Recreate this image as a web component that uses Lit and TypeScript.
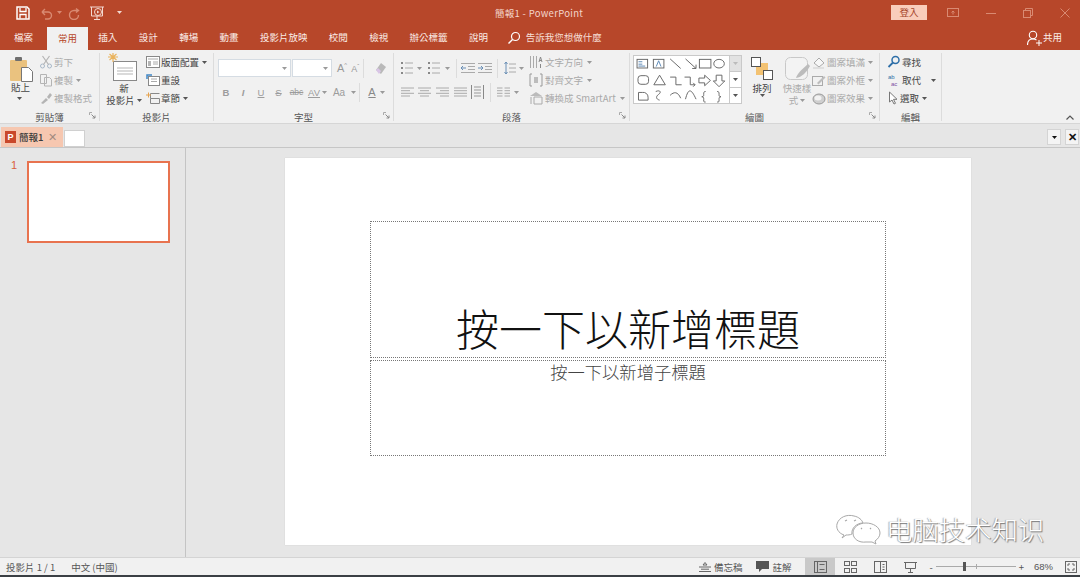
import { LitElement, html, css, svg } from 'lit';
import { customElement } from 'lit/decorators.js';

const GREY = '#9a9a9a';
const DARK = '#555';

// small helper so every icon shares the same svg setup
const ico = (w: number, h: number, body: unknown) => html`<svg class="ico" width=${w} height=${h} viewBox="0 0 ${w} ${h}" fill="none">${body}</svg>`;

const icons = {
  save: ico(14, 14, svg`<path d="M1 1h10l2 2v10H1z" stroke="#fff" stroke-width="1.500"/><path d="M4 2v3.500h6V2M4 12.500V8.500h6v4" stroke="#fff" stroke-width="1.300"/>`),
  undo: ico(14, 14, svg`<path d="M3 6h6a3.500 3.500 0 0 1 0 7H6M3 6l3-3M3 6l3 3" stroke="#d98a72" stroke-width="1.400"/>`),
  redo: ico(14, 14, svg`<path d="M9 2.500l2.500 2-2.500 2M11 4.500H7a4.500 4.500 0 1 0 4.500 4.500" stroke="#d98a72" stroke-width="1.400"/>`),
  present: ico(16, 16, svg`<path d="M1 2h14M2.500 2v9h11V2M8 11v3M5 14.500h6" stroke="#f3d9d0"/><circle cx="9" cy="7" r="3.500" stroke="#f3d9d0"/><path d="M8 5.500l2.500 1.500L8 8.500z" fill="#f3d9d0"/>`),
  search: ico(14, 14, svg`<circle cx="8.500" cy="5.500" r="4" stroke="#fff" stroke-width="1.200"/><path d="M5.500 8.500L1.500 12.500" stroke="#fff" stroke-width="1.400"/>`),
  share: ico(15, 16, svg`<circle cx="6" cy="5" r="3.700" stroke="#fff" stroke-width="1.100"/><path d="M.5 15c0-4 2-6 5.500-6 1.500 0 2.500.3 3.500 1" stroke="#fff" stroke-width="1.100"/><path d="M9 13h6M12 10v6" stroke="#fff"/>`),
  ribbonOpt: ico(12, 10, svg`<rect x=".5" y=".5" width="11" height="8" stroke="#d98a72"/><path d="M6 6.500V3M4.500 4.500L6 3l1.500 1.500" stroke="#d98a72"/>`),
  min: ico(10, 10, svg`<path d="M0 5.500h10" stroke="#d98a72"/>`),
  restore: ico(10, 10, svg`<rect x=".5" y="2.500" width="7" height="7" stroke="#d98a72"/><path d="M2.500 2.500v-2h7v7h-2" stroke="#d98a72"/>`),
  close: ico(10, 10, svg`<path d="M.5.500l9 9M9.500.500l-9 9" stroke="#d98a72"/>`),
  paste: ico(24, 25, svg`<rect x="0" y="3" width="17" height="21" rx="1" fill="#eac27f"/><rect x="5" y="0" width="7" height="4" rx="1" fill="#6f6f6f"/><path d="M11.500 10.500h7l4 4v10h-11z" fill="#fff" stroke="#777"/>`),
  cut: ico(14, 14, svg`<circle cx="3.500" cy="11" r="2" stroke="#a8b8c8"/><circle cx="10.500" cy="11" r="2" stroke="#a8b8c8"/><path d="M4.500 9.500L10.500 1M9.500 9.500L3.500 1" stroke="#b4b4b4" stroke-width="1.200"/>`),
  copy: ico(14, 14, svg`<path d="M1.500 1.500h6v9h-6zM5.500 4.500h5l2 2v6.500h-7z" stroke="#b4b4b4" fill="#f1f1f1"/>`),
  brush: ico(14, 14, svg`<path d="M2 12l5-5 2 2-5 4zM8 6l3-4 2 2-3 4z" fill="#b4b4b4"/>`),
  newSlide: ico(34, 32, svg`<rect x="6.500" y="8.500" width="23" height="19" fill="#fff" stroke="#888"/><path d="M10 15h16M10 18h16M10 21h16" stroke="#b5b5b5"/><path d="M1 4h10M6 0v9M2.500 1l7 6M9.500 1l-7 6" stroke="#eab35c" stroke-width="1.200"/>`),
  layout: ico(14, 12, svg`<rect x=".5" y=".5" width="13" height="11" fill="#fff" stroke="#888"/><path d="M2 3h10" stroke="#aaa"/><rect x="2" y="5" width="3" height="5" fill="#b5b5b5"/><path d="M7 6h5M7 8h5" stroke="#aaa"/>`),
  reset: ico(14, 12, svg`<rect x="2.500" y="2.500" width="11" height="9" fill="#fff" stroke="#888"/><path d="M5 5h6M5 7.500h6" stroke="#aaa"/><path d="M1 5V1h5" stroke="#3f86c6" stroke-width="1.500"/>`),
  section: ico(14, 12, svg`<path d="M4.500 1.500h9M4.500 6.500h9v5h-9zM4.500 1.500v5" stroke="#888"/><path d="M0 3h5M2.500.500v5" stroke="#e6a24d"/>`),
  eraser: ico(14, 14, svg`<path d="M2 9l5-7 5 4-5 7z" fill="#b9b9b9"/><path d="M2 9l3 4 2-3-3-3z" fill="#d9c5e6"/>`),
  list: ico(12, 14, svg`<path d="M0 2h2M0 7h2M0 12h2" stroke="#666" stroke-width="1.500"/><path d="M4 2h8M4 7h8M4 12h8" stroke="#aaa"/>`),
  indentL: ico(14, 12, svg`<path d="M0 1.500h14M7 4.500h7M7 7.500h7M0 10.500h14" stroke="#aaa"/><path d="M0 6h5M0 6l2-2M0 6l2 2" stroke="#6a8fb5"/>`),
  indentR: ico(14, 12, svg`<path d="M0 1.500h14M7 4.500h7M7 7.500h7M0 10.500h14" stroke="#aaa"/><path d="M0 6h5M5 6L3 4M5 6L3 8" stroke="#6a8fb5"/>`),
  lineH: ico(12, 14, svg`<path d="M5 3h7M5 7h7M5 11h7" stroke="#aaa"/><path d="M2 1v12M.5 3L2 1l1.500 2M.5 11L2 13l1.500-2" stroke="#6a8fb5"/>`),
  alignL: ico(13, 10, svg`<path d="M0 1h13M0 3.700h9M0 6.300h13M0 9h9" stroke="#aaa"/>`),
  alignC: ico(13, 10, svg`<path d="M0 1h13M2 3.700h9M0 6.300h13M2 9h9" stroke="#aaa"/>`),
  alignR: ico(13, 10, svg`<path d="M0 1h13M4 3.700h9M0 6.300h13M4 9h9" stroke="#aaa"/>`),
  alignJ: ico(13, 10, svg`<path d="M0 1h13M0 3.700h13M0 6.300h13M0 9h13" stroke="#aaa"/>`),
  alignD: ico(13, 14, svg`<path d="M.5 0v14M12.500 0v14" stroke="#888"/><path d="M3 2h7M3 5h7M3 8h7M3 11h7" stroke="#999"/>`),
  cols: ico(13, 10, svg`<path d="M0 1h5.500M0 3.700h5.500M0 6.300h5.500M0 9h5.500M7.500 1h5.500M7.500 3.700h5.500M7.500 6.300h5.500M7.500 9h5.500" stroke="#aaa"/>`),
  textDir: ico(14, 14, svg`<path d="M1.500 1v12M4.500 1v12M7.500 1v12" stroke="#aaa"/><path d="M10 7l1.500-5L13 7M10.500 5.500h2M11.500 9v4" stroke="#888"/>`),
  alignText: ico(14, 14, svg`<path d="M3 1H1v12h2M11 1h2v12h-2" stroke="#999"/><path d="M5 5h4M5 7h4M5 9h4" stroke="#888"/>`),
  smartArt: ico(14, 14, svg`<path d="M1 5l6-4 6 4z" fill="#bbb"/><path d="M5 6h8v7H5z" stroke="#aaa"/><path d="M2 6v7" stroke="#aaa"/>`),
  arrange: ico(22, 23, svg`<rect x="5" y="6" width="12" height="12" fill="#f3c272"/><rect x=".5" y=".5" width="9" height="9" fill="#fff" stroke="#555"/><rect x="12.500" y="13.500" width="9" height="9" fill="#fff" stroke="#555"/>`),
  quick: ico(25, 23, svg`<rect x=".5" y=".5" width="22" height="22" rx="5" fill="#f3f3f3" stroke="#c8c8c8"/><path d="M11 21c1-4 5-8 12-14l2 2c-4 7-8 11-14 12z" fill="#bcbcbc"/>`),
  fill: ico(14, 13, svg`<path d="M2 7l5-5 5 5-5 4z" stroke="#aaa" fill="#f7f7f7"/><path d="M1 12h11" stroke="#d8d8d8" stroke-width="1.500"/>`),
  outline: ico(14, 13, svg`<rect x=".5" y="2.500" width="10" height="9" stroke="#aaa"/><path d="M5 9l7-7 1.500 1.500-7 7z" fill="#bdbdbd"/>`),
  effect: ico(14, 13, svg`<ellipse cx="7" cy="7" rx="6" ry="5" fill="#cfcfcf" stroke="#999"/><ellipse cx="6" cy="6" rx="3.500" ry="2.500" fill="#f2f2f2"/>`),
  find: ico(14, 14, svg`<circle cx="8.500" cy="5" r="3.500" stroke="#2e6fa8" stroke-width="1.500"/><path d="M6 7.500L1.500 12" stroke="#2e6fa8" stroke-width="1.800"/>`),
  pointer: ico(12, 14, svg`<path d="M2.500 1v10l2.500-2 2 4 1.500-.7-2-4h3.500z" stroke="#777" fill="#fff"/>`),
  notes: ico(12, 10, svg`<path d="M6 .5l2 2.500H4zM0 5h12M2 7.200h8M0 9.500h12" stroke="#666"/>`),
  comment: ico(13, 11, svg`<path d="M0 0h13v8H6l-3 3V8H0z" fill="#555"/>`),
  normal: ico(13, 12, svg`<rect x=".5" y=".5" width="12" height="11" stroke="#666"/><path d="M3.500.5v11M5.500 3.500h5M5.500 8.500h5" stroke="#666"/>`),
  sorter: ico(13, 12, svg`<rect x=".5" y=".5" width="5" height="4" stroke="#666"/><rect x="7.500" y=".5" width="5" height="4" stroke="#666"/><rect x=".5" y="7.500" width="5" height="4" stroke="#666"/><rect x="7.500" y="7.500" width="5" height="4" stroke="#666"/>`),
  reading: ico(13, 12, svg`<rect x=".5" y=".5" width="12" height="11" stroke="#666"/><path d="M6.500.5v11M8.500 3.500h2M8.500 6h2M8.500 8.500h2" stroke="#666"/>`),
  show: ico(13, 12, svg`<path d="M0 1.500h13M1.500 1.500v6h10v-6M6.500 7.500v4M4 11.500h5" stroke="#666"/>`),
  fit: ico(12, 12, svg`<rect x=".5" y=".5" width="11" height="11" stroke="#666"/><path d="M3 5V3h2M7 3h2v2M9 7v2H7M5 9H3V7" stroke="#666"/>`),
};

const caret = (c = GREY) => html`<svg class="caret" width="5" height="3" viewBox="0 0 5 3"><path d="M0 0h5L2.500 3z" fill=${c}/></svg>`;

const launcher = html`<svg class="launcher" width="7" height="7" viewBox="0 0 7 7" fill="none"><path d="M.5 3V.5H3" stroke="#aaa"/><path d="M2.500 2.500L6 6M6 3.500V6H3.500" stroke="#8a8a8a"/></svg>`;

const gallery = svg`<svg class="shapes" width="98" height="47" viewBox="0 0 98 49" fill="none" stroke="#666">
  <rect x="2.500" y="3.500" width="11" height="9" fill="#fff"/><path d="M4 6h4M4 8.500h4M4 10.500h7" stroke="#5b88b5"/>
  <rect x="19.500" y="3.500" width="11" height="9" fill="#fff"/><path d="M25 5l-2.500 6M25 5l2.500 6" stroke="#5b88b5"/>
  <path d="M37 3l11 10M53 3l11 10M60 13h4v-4"/>
  <rect x="67.500" y="3.500" width="12" height="9"/><ellipse cx="88" cy="8" rx="5.500" ry="4.500"/>
  <rect x="3.500" y="20.500" width="11" height="9" rx="3"/><path d="M26 20l6 10H20zM37 22h6v8h6M52 22h6v8h5M61 28l2 2-2 2"/>
  <path d="M67 23h6v-3l6 5.500-6 5.500v-3h-6zM85 20h6v6h3l-6 6-6-6h3z"/>
  <path d="M4 38h4a5 5 0 0 1 6 5v3H4zM22 37c5-2 6 1 3 3s-3 5 1 6M37 41c4-4 8-4 11 3M53 45c3-12 6-11 11 0M74 37c-2 0-2 1-2 3s0 2-2 2.500c2 .5 2 .5 2 3s0 2.500 2 2.500M86 37c2 0 2 1 2 3s0 2 2 2.500c-2 .5-2 .5-2 3s0 2.500-2 2.500"/>
</svg>`;

@customElement('app-root')
export class AppRoot extends LitElement {
  static styles = css`
    :host {
      display: block;
      width: 1080px;
      height: 577px;
      overflow: hidden;
      font-family: "Noto Sans CJK TC", "Liberation Sans", sans-serif;
      font-size: 9.5px;
      color: #444;
      background: #e6e6e6;
    }
    .ico, .caret, .launcher { display: block; flex: none; }

    .titlebar {
      height: 25px;
      background: #b7472a;
      display: flex;
      align-items: center;
      color: #f3d5ca;
    }
    .qat {
      width: 495px;
      display: flex;
      align-items: center;
      padding-left: 16px;
      box-sizing: border-box;
    }
    .qat .undo { margin: 0 4px 0 9px; }
    .qat .redo { margin: 0 8px 0 5px; }
    .qat .more { margin-left: 12px; }
    .title { width: 396px; letter-spacing: .3px; white-space: nowrap; }
    .signin {
      width: 36px;
      height: 15px;
      line-height: 15px;
      text-align: center;
      background: #f9cdbb;
      color: #a5442a;
    }
    .winbtns { display: flex; align-items: center; gap: 27px; margin-left: 20px; }

    .tabs {
      height: 25px;
      background: #b7472a;
      display: flex;
      padding-left: 3.3px;
      color: #fbeee9;
      line-height: 25px;
    }
    .tab { padding: 0 10.7px; white-space: nowrap; }
    .tab.active {
      background: #f1f1f1;
      color: #b7472a;
      height: 23px;
      margin: 2px 0 0 3.6px;
      line-height: 23px;
    }
    .tell { display: flex; align-items: center; gap: 5px; margin-left: 8px; color: #f6dfd7; }
    .shareBtn { display: flex; align-items: center; gap: 1px; margin-left: auto; padding-right: 18px; }

    .ribbon {
      height: 74px;
      background: #f1f1f1;
      display: flex;
      border-bottom: 1px solid #d6d6d6;
      box-sizing: border-box;
      position: relative;
    }
    .group {
      position: relative;
      flex: none;
      display: flex;
      flex-direction: column;
      border-right: 1px solid #dcdcdc;
      margin: 3px 0 2px;
      box-sizing: border-box;
    }
    .g-clip { width: 100px; }
    .g-slides { width: 114px; }
    .g-font { width: 180px; }
    .g-para { width: 236px; }
    .g-draw { width: 250px; }
    .g-edit { width: 62px; }
    .gbody { height: 56px; display: flex; flex: none; }
    .glabel { text-align: center; line-height: 16px; height: 12px; color: #555; }
    .launcher { position: absolute; right: 3px; bottom: 2px; }

    .col { display: flex; flex-direction: column; }
    .row { height: 18px; display: flex; align-items: center; gap: 1px; white-space: nowrap; }
    .row.off { color: #a9a9a9; }
    .row .caret { margin-left: 2px; }
    .big { display: flex; flex-direction: column; align-items: center; line-height: 12px; padding-top: 4px; box-sizing: border-box; }
    .big > .lbl { margin-top: 2px; }
    .inline { display: flex; align-items: center; gap: 2px; }
    .big.off { color: #aaa; }
    .sep { width: 1px; height: 19px; background: #dcdcdc; flex: none; }

    .paste { width: 39px; padding-left: 10px; align-items: flex-start; }
    .paste > .lbl { margin: -1px 0 0 1px; }
    .paste .caret { margin: 4px 0 0 7px; }
    .newslide { width: 46px; padding: 0 0 0 2px; }
    .newslide > .lbl { margin-top: -3px; }
    .f-col { padding-left: 4px; }
    .f-top { display: flex; align-items: center; height: 24px; margin-top: 3px; }
    .f-a1 { margin-left: 5px; font: 11px "Liberation Sans", sans-serif; color: #999; }
    .f-a2 { margin-left: 4px; font: 9px "Liberation Sans", sans-serif; color: #999; }
    .f-a1 sup, .f-a2 sup { font-size: 6px; }
    .f-top .sep { margin: 0 10px 0 4px; }

    .combo {
      height: 18px;
      background: #fff;
      border: 1px solid #d5dce3;
      box-sizing: border-box;
      display: flex;
      align-items: center;
      justify-content: flex-end;
      padding-right: 3px;
    }
    .combo.name { width: 73px; }
    .combo.size { width: 40px; margin-left: 1px; }

    .fontRow { height: 24px; display: flex; align-items: center; color: #9c9c9c; }
    .fontRow span { flex: none; text-align: center; font-family: "Liberation Sans", sans-serif; }
    .fontRow .sep { margin: 0 4px 0 3px; }
    .fb { width: 16px; font-weight: bold; }
    .fi { width: 18px; font-style: italic; font-weight: bold; }
    .fu { width: 18px; text-decoration: underline; }
    .fs { width: 17px; text-decoration: line-through; }
    .fabc { width: 19px; text-decoration: line-through; font-size: 8.5px; }
    .fav { width: 16px; text-decoration: underline; }
    .faa { width: 24px; font-size: 10px; }
    .fcolor { width: 16px; font-size: 11px; text-decoration: underline; color: #888; }

    .p-left { width: 135px; padding-left: 7px; box-sizing: border-box; }
    .p-top { display: flex; align-items: center; height: 24px; margin-top: 3px; }
    .p-bot { display: flex; align-items: center; gap: 4px; height: 24px; }
    .p-bot .sep { margin: 0 2px; }
    .a13 { width: 13px; }
    .a14 { width: 14px; }
    .p-top > .m3 { margin-left: 3px; }
    .p-top > .m4 { margin-left: 4px; }
    .p-top > .m5 { margin-left: 5px; }
    .p-top > .m6 { margin-left: 6px; }
    .p-right .row { gap: 2px; }

    .gallery {
      width: 109px;
      height: 49px;
      margin: 2px 0 0 3px;
      background: #fff;
      border: 1px solid #c9c9c9;
      box-sizing: border-box;
      display: flex;
      justify-content: space-between;
    }
    .shapes { display: block; }
    .scroll { width: 11px; display: flex; flex-direction: column; border-left: 1px solid #c9c9c9; }
    .scroll div { flex: 1; display: flex; align-items: center; justify-content: center; border-bottom: 1px solid #c9c9c9; }
    .scroll div:first-child { background: #e2e2e2; }
    .scroll div:last-child { border-bottom: 0; }
    .arrange { width: 26px; margin-left: 7px; }
    .quick { width: 30px; margin-left: 7px; }
    .e-col { padding-left: 7px; }
    .e-gap { width: 6px; }
    .collapse { position: absolute; right: 6px; bottom: 3px; }
    .abac { display: block; flex: none; }

    .docbar {
      height: 24px;
      background: #e6e6e6;
      border-bottom: 1px solid #c6c6c6;
      box-sizing: border-box;
      display: flex;
      align-items: flex-end;
      padding-left: 1px;
      gap: 1px;
    }
    .doctab {
      width: 62px;
      height: 20px;
      background: #f6c7b0;
      display: flex;
      align-items: center;
      gap: 3px;
      padding-left: 4px;
      box-sizing: border-box;
      color: #3a3a3a;
      font-weight: 500;
    }
    .doctab .x { margin-left: 2px; color: #a08a80; font-family: "Liberation Sans", sans-serif; font-size: 11px; }
    .docnew { width: 21px; height: 17px; background: #fff; border: 1px solid #d0d0d0; box-sizing: border-box; }
    .ppt {
      width: 11px;
      height: 12px;
      background: #c9482b;
      color: #fff;
      font: bold 9px/12px "Liberation Sans", sans-serif;
      text-align: center;
    }
    .docbtns { margin-left: auto; display: flex; gap: 4px; padding: 0 1px 2px 0; }
    .docbtn {
      width: 14px;
      height: 16px;
      background: #f4f4f4;
      border: 1px solid #d4d4d4;
      box-sizing: border-box;
      display: flex;
      align-items: center;
      justify-content: center;
      color: #111;
      font: bold 11px/1 "Liberation Sans", sans-serif;
    }

    .main { height: 410px; display: flex; position: relative; background: #e6e6e6; border-bottom: 1px solid #d4d4d4; box-sizing: border-box; }
    .thumbs {
      width: 186px;
      border-right: 1px solid #c4c4c4;
      box-sizing: border-box;
      display: flex;
      padding: 12px 0 0 11px;
      gap: 10px;
    }
    .thumbNum { color: #d9603b; font: 11px/11px "Liberation Sans", sans-serif; }
    .thumb { width: 143px; height: 82px; background: #fff; border: 2px solid #e8734f; box-sizing: border-box; margin-top: 1px; }
    .stage { flex: 1; padding: 10px 0 0 99px; }
    .slide {
      width: 686px;
      height: 387px;
      background: #fff;
      box-shadow: 0 0 1px #c4c4c4;
      padding: 63px 0 0 85px;
      box-sizing: border-box;
    }
    .ph {
      width: 516px;
      box-sizing: border-box;
      border: 1px dotted #777;
      display: flex;
      justify-content: center;
      color: #222;
      font-weight: 300;
      white-space: nowrap;
    }
    .ph.t { height: 137px; align-items: flex-end; font-size: 43px; line-height: 54px; padding-bottom: 3px; margin-bottom: 2px; color: #111; }
    .ph.s { height: 96px; font-size: 17.3px; line-height: 22px; color: #444; }

    .wm {
      position: absolute;
      left: 835px;
      top: 365px;
      display: flex;
      align-items: center;
      font-family: "Noto Sans CJK SC", sans-serif;
      font-size: 26.4px;
      line-height: 32px;
      color: #fff;
      white-space: nowrap;
      text-shadow: 1px 1px 1px #777, -1px 0 1px #aaa;
      font-weight: 300;
    }
    .wm svg { margin-right: 3px; }

    .status {
      height: 17px;
      background: #f1f1f1;
      display: flex;
      align-items: center;
      padding-left: 6px;
      color: #555;
      white-space: nowrap;
    }
    .status .lang { margin-left: 16px; }
    .status .right { margin-left: auto; display: flex; align-items: center; height: 17px; }
    .sitem { display: flex; align-items: center; gap: 3px; }
    .sitem.mr { margin-right: 14px; }
    .view { width: 30px; height: 17px; display: flex; align-items: center; justify-content: center; }
    .view.on { background: #c9c9c9; }
    .zoombar { margin-left: 4px; }
    .slider { position: relative; width: 80px; height: 1px; background: #aaa; }
    .knob { position: absolute; left: 27px; top: -4px; width: 3px; height: 9px; background: #555; }
    .tick { position: absolute; left: 40px; top: -2px; width: 1px; height: 5px; background: #aaa; }
    .pct { margin-left: 10px; width: 31px; font-family: "Liberation Sans", sans-serif; }
    .endpad { width: 3px; }
    .foot { height: 2px; background: #3a3f44; }
  `;

  render() {
    return html`
      <div class="titlebar">
        <div class="qat">
          ${icons.save}
          <span class="undo">${icons.undo}</span>
          ${caret('#d98a72')}
          <span class="redo">${icons.redo}</span>
          ${icons.present}
          <span class="more">${caret('#f3d9d0')}</span>
        </div>
        <div class="title">簡報1 - PowerPoint</div>
        <div class="signin">登入</div>
        <div class="winbtns">
          ${icons.ribbonOpt}${icons.min}${icons.restore}${icons.close}
        </div>
      </div>

      <div class="tabs">
        ${['檔案', '常用', '插入', '設計', '轉場', '動畫', '投影片放映', '校閱', '檢視', '辦公標籤', '說明'].map(
          (t, i) => html`<div class="tab ${i === 1 ? 'active' : ''}">${t}</div>`
        )}
        <div class="tell">${icons.search}<span>告訴我您想做什麼</span></div>
        <div class="shareBtn">${icons.share}<span>共用</span></div>
      </div>

      <div class="ribbon">
        ${this.clipboard()}
        ${this.slides()}
        ${this.font()}
        ${this.paragraph()}
        ${this.drawing()}
        ${this.editing()}
        <svg class="collapse" width="8" height="5" viewBox="0 0 8 5" fill="none"><path d="M.5 4.500L4 1l3.500 3.500" stroke="#555" stroke-width="1.200"/></svg>
      </div>

      <div class="docbar">
        <div class="doctab"><div class="ppt">P</div><span>簡報1</span><span class="x">✕</span></div>
        <div class="docnew"></div>
        <div class="docbtns">
          <div class="docbtn">${caret('#111')}</div>
          <div class="docbtn">✕</div>
        </div>
      </div>

      <div class="main">
        <div class="thumbs">
          <div class="thumbNum">1</div>
          <div class="thumb"></div>
        </div>
        <div class="stage">
          <div class="slide">
            <div class="ph t">按一下以新增標題</div>
            <div class="ph s">按一下以新增子標題</div>
          </div>
        </div>
        <div class="wm">
          <svg width="48" height="32" viewBox="0 0 48 32" fill="none" stroke="#a8a8a8">
            <path d="M9 22C3 20 1 15 2 11 4 4 12 1 19 3c5 1 8 4 9 7-6 0-12 5-11 11-2 1-4 1-6 1l-4 3z" fill="#fff"/>
            <path d="M31 29c-7 1-13-3-13-9s6-10 13-10 14 4 14 10c0 3-2 6-5 8l1 3-4-2z" fill="#fff"/>
            <path d="M10 8l2-1M19 8l2-1M26 16l1-1M35 16l1-1" stroke-width="1.200"/>
          </svg>
          <span>电脑技术知识</span>
        </div>
      </div>

      <div class="status">
        <span>投影片 1 / 1</span>
        <span class="lang">中文 (中國)</span>
        <div class="right">
          <div class="sitem mr">${icons.notes}<span>備忘稿</span></div>
          <div class="sitem mr">${icons.comment}<span>註解</span></div>
          <div class="view on">${icons.normal}</div>
          <div class="view">${icons.sorter}</div>
          <div class="view">${icons.reading}</div>
          <div class="view">${icons.show}</div>
          <div class="sitem zoombar">
            <span>-</span>
            <div class="slider"><div class="tick"></div><div class="knob"></div></div>
            <span>+</span>
          </div>
          <span class="pct">68%</span>
          ${icons.fit}
          <span class="endpad"></span>
        </div>
      </div>
      <div class="foot"></div>
    `;
  }

  clipboard() {
    return html`
      <div class="group g-clip">
        <div class="gbody">
          <div class="big paste">
            ${icons.paste}
            <span class="lbl">貼上</span>
            ${caret(DARK)}
          </div>
          <div class="col">
            <div class="row off">${icons.cut}<span>剪下</span></div>
            <div class="row off">${icons.copy}<span>複製</span>${caret()}</div>
            <div class="row off">${icons.brush}<span>複製格式</span></div>
          </div>
        </div>
        <div class="glabel">剪貼簿</div>
        ${launcher}
      </div>`;
  }

  slides() {
    return html`
      <div class="group g-slides">
        <div class="gbody">
          <div class="big newslide">
            ${icons.newSlide}
            <span class="lbl">新</span>
            <span class="inline">投影片${caret(DARK)}</span>
          </div>
          <div class="col">
            <div class="row">${icons.layout}<span>版面配置</span>${caret(DARK)}</div>
            <div class="row">${icons.reset}<span>重設</span></div>
            <div class="row">${icons.section}<span>章節</span>${caret(DARK)}</div>
          </div>
        </div>
        <div class="glabel">投影片</div>
      </div>`;
  }

  font() {
    return html`
      <div class="group g-font">
        <div class="gbody">
          <div class="col f-col">
            <div class="f-top">
              <div class="combo name">${caret()}</div>
              <div class="combo size">${caret()}</div>
              <span class="f-a1">A<sup>^</sup></span>
              <span class="f-a2">A<sup>ˇ</sup></span>
              <div class="sep"></div>
              ${icons.eraser}
            </div>
            <div class="fontRow">
              <span class="fb">B</span>
              <span class="fi">I</span>
              <span class="fu">U</span>
              <span class="fs">S</span>
              <span class="fabc">abc</span>
              <span class="fav">AV</span>
              ${caret()}
              <span class="faa">Aa</span>
              ${caret()}
              <div class="sep"></div>
              <span class="fcolor">A</span>
              ${caret()}
            </div>
          </div>
        </div>
        <div class="glabel">字型</div>
        ${launcher}
      </div>`;
  }

  paragraph() {
    return html`
      <div class="group g-para">
        <div class="gbody">
          <div class="col p-left">
            <div class="p-top">
              ${icons.list}
              <span class="m4">${caret()}</span>
              <span class="m6">${icons.list}</span>
              <span class="m5">${caret()}</span>
              <div class="sep m6"></div>
              <span class="m4">${icons.indentL}</span>
              <span class="m3">${icons.indentR}</span>
              <div class="sep m5"></div>
              <span class="m6">${icons.lineH}</span>
              <span class="m3">${caret()}</span>
            </div>
            <div class="p-bot">
              <span class="a13">${icons.alignL}</span>
              <span class="a14">${icons.alignC}</span>
              <span class="a14">${icons.alignR}</span>
              <span class="a13">${icons.alignJ}</span>
              ${icons.alignD}
              <div class="sep"></div>
              ${icons.cols}${caret()}
            </div>
          </div>
          <div class="col p-right">
            <div class="row off">${icons.textDir}<span>文字方向</span>${caret()}</div>
            <div class="row off">${icons.alignText}<span>對齊文字</span>${caret()}</div>
            <div class="row off">${icons.smartArt}<span>轉換成 SmartArt</span>${caret()}</div>
          </div>
        </div>
        <div class="glabel">段落</div>
        ${launcher}
      </div>`;
  }

  drawing() {
    return html`
      <div class="group g-draw">
        <div class="gbody">
          <div class="gallery">
            ${gallery}
            <div class="scroll">
              <div>${caret('#bbb')}</div>
              <div>${caret(DARK)}</div>
              <div>${caret(DARK)}</div>
            </div>
          </div>
          <div class="big arrange">
            ${icons.arrange}
            <span class="lbl">排列</span>
            ${caret(DARK)}
          </div>
          <div class="big quick off">
            ${icons.quick}
            <span class="lbl">快速樣</span>
            <span class="inline">式${caret()}</span>
          </div>
          <div class="col">
            <div class="row off">${icons.fill}<span>圖案填滿</span>${caret()}</div>
            <div class="row off">${icons.outline}<span>圖案外框</span>${caret()}</div>
            <div class="row off">${icons.effect}<span>圖案效果</span>${caret()}</div>
          </div>
        </div>
        <div class="glabel">繪圖</div>
        ${launcher}
      </div>`;
  }

  editing() {
    return html`
      <div class="group g-edit">
        <div class="gbody">
          <div class="col e-col">
            <div class="row">${icons.find}<span>尋找</span></div>
            <div class="row">
              <svg class="abac" width="14" height="14" viewBox="0 0 14 14"><text x="1" y="6" font-size="6" fill="#2e6fa8" font-family="Liberation Sans">ab</text><text x="4" y="13" font-size="6" fill="#7a4fa3" font-family="Liberation Sans">ac</text></svg>
              <span>取代</span>
              <span class="e-gap"></span>
              ${caret(DARK)}
            </div>
            <div class="row">${icons.pointer}<span>選取</span>${caret(DARK)}</div>
          </div>
        </div>
        <div class="glabel">編輯</div>
      </div>`;
  }
}
